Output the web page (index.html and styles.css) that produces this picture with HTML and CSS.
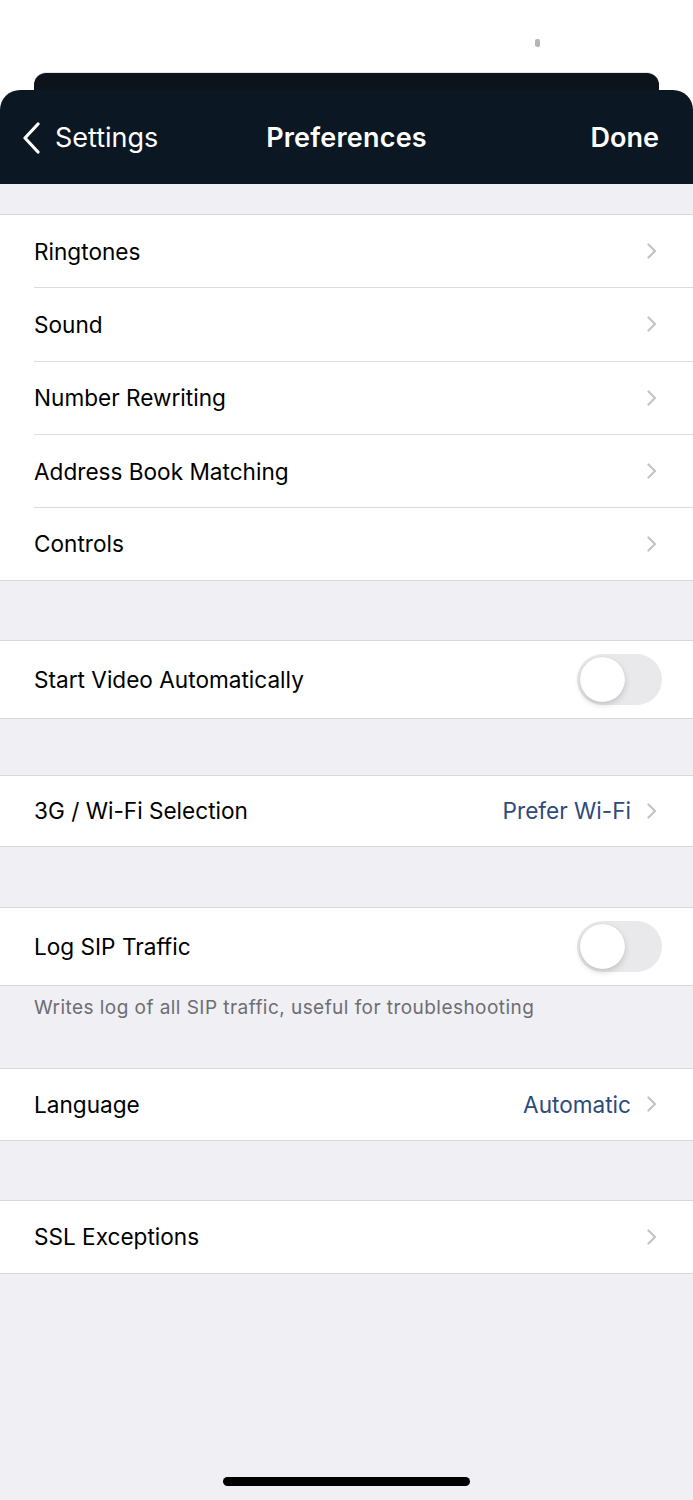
FILE: index.html
```html
<!DOCTYPE html>
<html>
    <head>
        <title>Preferences</title>
        <link rel="stylesheet" href="styles.css">
    </head>
    <body>
        <div class="page">
            <div class="header">
                <div class="status"><div class="dot"></div></div>
                <div class="sheetTab"></div>
                <div class="navbar">
                    <div class="back">
                        <svg width="20" height="32" viewBox="0 0 20 32"><path d="M17 2 L4 16 L17 30" fill="none" stroke="#fff" stroke-width="3.2" stroke-linecap="round" stroke-linejoin="round"/></svg>
                        <span>Settings</span>
                    </div>
                    <div class="title">Preferences</div>
                    <div class="done">Done</div>
                </div>
            </div>

            <div class="gap first"></div>
            <div class="group">
                <div class="row"><span class="label">Ringtones</span><span class="chev"></span></div>
                <div class="row"><span class="label">Sound</span><span class="chev"></span></div>
                <div class="row"><span class="label">Number Rewriting</span><span class="chev"></span></div>
                <div class="row"><span class="label">Address Book Matching</span><span class="chev"></span></div>
                <div class="row"><span class="label">Controls</span><span class="chev"></span></div>
            </div>

            <div class="gap"></div>
            <div class="group">
                <div class="row tall"><span class="label">Start Video Automatically</span><span class="toggle"><span class="knob"></span></span></div>
            </div>

            <div class="gap small"></div>
            <div class="group">
                <div class="row short"><span class="label">3G / Wi-Fi Selection</span><span class="value">Prefer Wi-Fi</span><span class="chev"></span></div>
            </div>

            <div class="gap wide"></div>
            <div class="group">
                <div class="row tall"><span class="label">Log SIP Traffic</span><span class="toggle"><span class="knob"></span></span></div>
            </div>
            <div class="note">Writes log of all SIP traffic, useful for troubleshooting</div>

            <div class="group">
                <div class="row"><span class="label">Language</span><span class="value">Automatic</span><span class="chev"></span></div>
            </div>

            <div class="gap"></div>
            <div class="group">
                <div class="row"><span class="label">SSL Exceptions</span><span class="chev"></span></div>
            </div>

            <div class="homeBox"><div class="home"></div></div>
        </div>
    </body>
</html>
```

FILE: styles.css
```css
*{
    padding: 0;
    margin: 0;
    box-sizing: border-box;
}
body {
    background-color: #efeff4;
    font-family: Inter, "Liberation Sans", sans-serif;
}
.page{
    min-height: 1500px;
    display: flex;
    flex-direction: column;
}
.header{
    background-color: #fff;
}
.status{
    height: 73px;
    padding-top: 39px;
    padding-left: 535px;
}
.dot{
    width: 5px;
    height: 8px;
    border-radius: 2px;
    background-color: #b5b5b5;
}
.sheetTab{
    background-color: #0c131b;
    height: 17px;
    margin: 0 34px;
    border-radius: 12px 12px 0 0;
    box-shadow: 0 -1px 0 #e4e4e4;
}
.navbar{
    background-color: #0b1723;
    height: 94px;
    border-radius: 20px 20px 0 0;
    display: flex;
    align-items: center;
    justify-content: space-between;
    padding: 0 34px 0 21px;
    color: #fff;
    font-size: 27px;
}
.back{
    display: flex;
    align-items: center;
    gap: 14px;
    width: 183px;
}
.back svg{
    margin-top: 1px;
}
.title{
    font-weight: 600;
    letter-spacing: 0.2px;
}
.done{
    font-weight: 600;
    width: 170px;
    text-align: right;
}

.gap{
    height: 59px;
}
.gap.first{
    height: 30px;
}
.gap.small{
    height: 56px;
}
.gap.wide{
    height: 60px;
}

.group{
    background-color: #fff;
    border-top: 1px solid #d9d9dd;
    border-bottom: 1px solid #d9d9dd;
}
.row{
    height: 73.3px;
    margin-left: 34px;
    padding-right: 36px;
    display: flex;
    align-items: center;
    font-size: 22.6px;
    color: #000;
    border-bottom: 1px solid #dcdce0;
}
.row:last-child{
    border-bottom: none;
    height: 71.5px;
}
.row.tall{
    height: 77px;
    padding-right: 31px;
}
.row.short{
    height: 70px;
}
.label{
    flex: 1;
}
.value{
    color: #2d4a7d;
    margin-right: 16px;
}
.chev{
    width: 10px;
    height: 16px;
    display: inline-block;
    background: no-repeat center/10px 16px;
    background-image: url("data:image/svg+xml,%3Csvg xmlns='http://www.w3.org/2000/svg' width='10' height='16' viewBox='0 0 10 16'%3E%3Cpath d='M1.5 1.5 L8 8 L1.5 14.5' fill='none' stroke='%23c4c4c8' stroke-width='2.2' stroke-linecap='round' stroke-linejoin='round'/%3E%3C/svg%3E");
}
.toggle{
    width: 85px;
    height: 51px;
    border-radius: 26px;
    background-color: #e9e9eb;
    position: relative;
}
.knob{
    position: absolute;
    left: 3px;
    top: 3px;
    width: 45px;
    height: 45px;
    border-radius: 50%;
    background-color: #fff;
    box-shadow: 0 3px 6px rgba(0,0,0,0.16), 0 0 1px rgba(0,0,0,0.12);
}
.note{
    height: 82px;
    padding: 10px 34px 0;
    font-size: 19px;
    letter-spacing: 0.45px;
    color: #6d6d72;
}
.homeBox{
    margin-top: auto;
    display: flex;
    justify-content: center;
    padding-bottom: 14px;
}
.home{
    width: 247px;
    height: 9px;
    border-radius: 5px;
    background-color: #000;
}
```
